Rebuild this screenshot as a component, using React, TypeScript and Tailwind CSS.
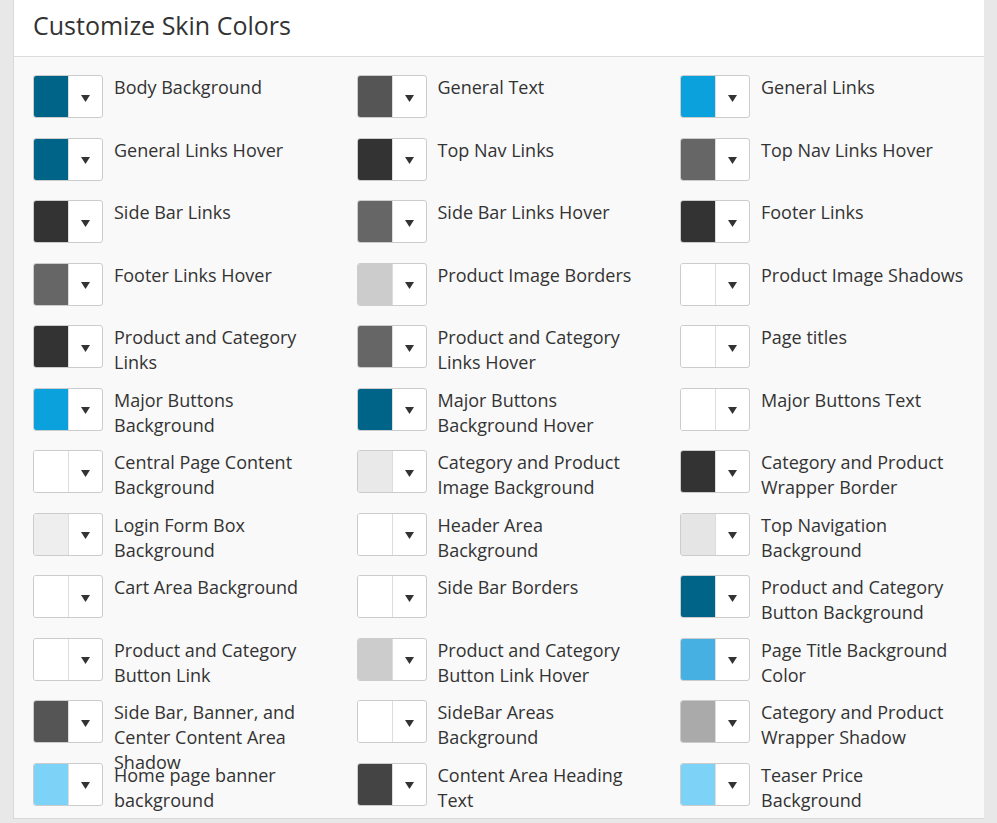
import React from 'react';

// liste des réglages : libellé + couleur courante
const SKIN_COLORS = [
  { label: 'Body Background', color: '#006489' },
  { label: 'General Text', color: '#555555' },
  { label: 'General Links', color: '#0ba1dc' },
  { label: 'General Links Hover', color: '#006489' },
  { label: 'Top Nav Links', color: '#333333' },
  { label: 'Top Nav Links Hover', color: '#666666' },
  { label: 'Side Bar Links', color: '#333333' },
  { label: 'Side Bar Links Hover', color: '#666666' },
  { label: 'Footer Links', color: '#333333' },
  { label: 'Footer Links Hover', color: '#666666' },
  { label: 'Product Image Borders', color: '#cccccc' },
  { label: 'Product Image Shadows', color: '#ffffff' },
  { label: 'Product and Category Links', color: '#333333' },
  { label: 'Product and Category Links Hover', color: '#666666' },
  { label: 'Page titles', color: '#ffffff' },
  { label: 'Major Buttons Background', color: '#0ba1dc' },
  { label: 'Major Buttons Background Hover', color: '#006489' },
  { label: 'Major Buttons Text', color: '#ffffff' },
  { label: 'Central Page Content Background', color: '#ffffff' },
  { label: 'Category and Product Image Background', color: '#e9e9e9' },
  { label: 'Category and Product Wrapper Border', color: '#333333' },
  { label: 'Login Form Box Background', color: '#eeeeee' },
  { label: 'Header Area Background', color: '#ffffff' },
  { label: 'Top Navigation Background', color: '#e5e5e5' },
  { label: 'Cart Area Background', color: '#ffffff' },
  { label: 'Side Bar Borders', color: '#ffffff' },
  { label: 'Product and Category Button Background', color: '#006489' },
  { label: 'Product and Category Button Link', color: '#ffffff' },
  { label: 'Product and Category Button Link Hover', color: '#cccccc' },
  { label: 'Page Title Background Color', color: '#45b0e1' },
  { label: 'Side Bar, Banner, and Center Content Area Shadow', color: '#555555' },
  { label: 'SideBar Areas Background', color: '#ffffff' },
  { label: 'Category and Product Wrapper Shadow', color: '#aaaaaa' },
  { label: 'Home page banner background', color: '#7dd3f7' },
  { label: 'Content Area Heading Text', color: '#444444' },
  { label: 'Teaser Price Background', color: '#7dd3f7' },
];

function ColorPicker({ color }: { color: string }) {
  return (
    <div className="flex h-[43px] w-[70px] shrink-0 overflow-hidden rounded-[3px] border border-[#cccccc] bg-white">
      <div className="w-[35px] border-r border-[#dddddd]" style={{ backgroundColor: color }} />
      <div className="flex flex-1 items-center justify-center pt-[3px]">
        <svg width="9" height="7" viewBox="0 0 9 7">
          <path d="M0 0H9L4.5 7Z" fill="#333" />
        </svg>
      </div>
    </div>
  );
}

export default function App() {
  return (
    <div className="flex h-[823px] bg-[#e8e8e8]" style={{ fontFamily: '"Open Sans", "Liberation Sans", sans-serif' }}>
      <div className="ml-[13px] w-[971px] self-start overflow-hidden border-b border-l border-[#d9d9d9] bg-[#f9f9f9]">
        {/* en-tête */}
        <div className="h-[57px] border-b border-[#dddddd] bg-white pl-[19px] pt-[9px]">
          <h1 className="text-[25px] leading-[33px] text-[#333]">Customize Skin Colors</h1>
        </div>

        {/* grille des couleurs */}
        <div className="grid h-[761px] grid-cols-[323.5px_323.5px_323px] pl-[19px] pt-[18px]">
          {SKIN_COLORS.map((item) => (
            <div key={item.label} className="flex h-[62.5px] gap-[11px]">
              <ColorPicker color={item.color} />
              <p className="w-[206px] text-[18px] leading-[25px] text-[#333]">{item.label}</p>
            </div>
          ))}
        </div>
      </div>
    </div>
  );
}
